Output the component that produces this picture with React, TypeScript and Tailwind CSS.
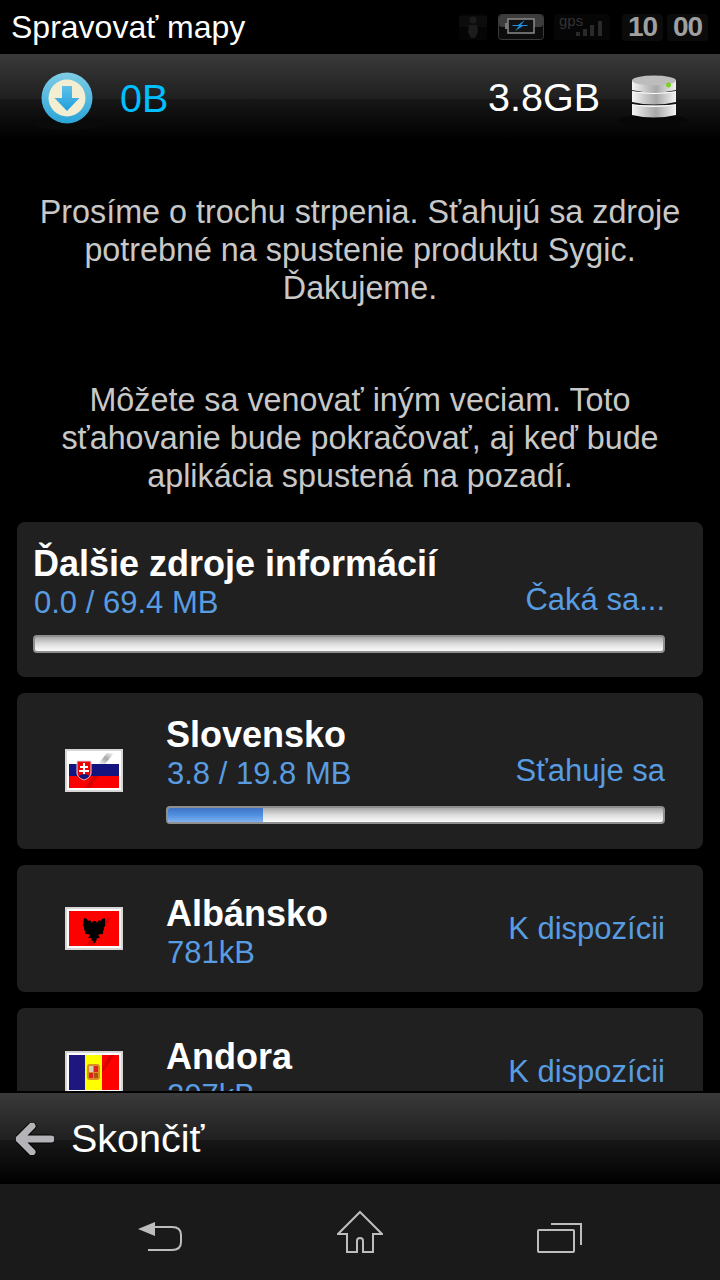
import React from "react";

const font = { fontFamily: '"Liberation Sans", Arial, sans-serif' };

function DownloadIcon() {
  return (
    <svg width="70" height="60" viewBox="0 0 70 60" className="shrink-0">
      <defs>
        <linearGradient id="dl" x1="0" y1="0" x2="0" y2="1">
          <stop offset="0" stopColor="#7fcde6" />
          <stop offset="1" stopColor="#2aa5d8" />
        </linearGradient>
        <linearGradient id="dla" x1="0" y1="0" x2="0" y2="1">
          <stop offset="0" stopColor="#5fc0ea" />
          <stop offset="1" stopColor="#1e9fdc" />
        </linearGradient>
      </defs>
      <ellipse cx="35" cy="51" rx="35" ry="7" fill="#0a0a0a" />
      <circle cx="35" cy="26" r="25.5" fill="url(#dl)" />
      <circle cx="35" cy="26" r="18.5" fill="#f3edd2" />
      <path d="M30 14h10v12h7.5L35 39 22.500 26H30z" fill="url(#dla)" />
    </svg>
  );
}

function DbIcon() {
  const slab = (y: number, h: number) => `M14 ${y}h44v${h - 3}q-22 5 -44 0z`;
  return (
    <svg width="70" height="54" viewBox="0 0 70 54" className="shrink-0">
      <defs>
        <linearGradient id="db" x1="0" y1="0" x2="1" y2="0">
          <stop offset="0" stopColor="#f6f6f6" />
          <stop offset="0.3" stopColor="#c8c8c8" />
          <stop offset="0.55" stopColor="#a8a8a8" />
          <stop offset="1" stopColor="#f4f4f4" />
        </linearGradient>
      </defs>
      <ellipse cx="35" cy="46" rx="35" ry="5" fill="#070707" />
      <path d={slab(31, 13)} fill="url(#db)" />
      <path d="M14 31q22 4 44 0v-1q-22 4-44 0z" fill="#fff" />
      <path d={slab(18, 13)} fill="url(#db)" />
      <path d="M14 18q22 4 44 0v-1q-22 4-44 0z" fill="#fff" />
      <path d={slab(6, 13)} fill="url(#db)" />
      <ellipse cx="36" cy="6.500" rx="22" ry="5" fill="#bdbdbd" />
      <circle cx="50.500" cy="11" r="2.500" fill="#79d321" />
    </svg>
  );
}

function Slovakia() {
  return (
    <svg width="58" height="43" viewBox="0 0 58 43">
      <defs>
        <linearGradient id="sk" x1="0" y1="1" x2="1" y2="0">
          <stop offset="0" stopColor="#777" stopOpacity="0" />
          <stop offset="0.5" stopColor="#777" stopOpacity="0.65" />
          <stop offset="1" stopColor="#777" stopOpacity="0" />
        </linearGradient>
      </defs>
      <rect width="58" height="43" fill="#d6d6d6" />
      <rect x="2" y="2" width="54" height="39" fill="#fff" />
      <rect x="4" y="15" width="50" height="12" fill="#14147e" />
      <rect x="4" y="27" width="50" height="12" fill="#fb0000" />
      <path d="M33 15l9-11h7l-9 11z" fill="url(#sk)" />
      <path d="M20 39l8-12h5l-8 12z" fill="#900" opacity="0.35" />
      <path d="M12 12h14v12q0 4-7 7q-7-3-7-7z" fill="#f00000" stroke="#d8d8f0" strokeWidth="1" />
      <path d="M18 14h2v3h3v2h-3v2h4v2h-4v4h-2v-4h-4v-2h4v-2h-3v-2h3z" fill="#fff" />
      <path d="M13.500 27q5.500-4 11 0q-2 2.500-5.500 3.500q-3.500-1-5.500-3.500z" fill="#14147e" />
    </svg>
  );
}

function Albania() {
  return (
    <svg width="58" height="43" viewBox="0 0 58 43">
      <rect width="58" height="43" fill="#d6d6d6" />
      <rect x="2" y="2" width="54" height="39" fill="#fff" />
      <rect x="4" y="4" width="50" height="35" fill="#fd0000" />
      <path d="M21 38l20-26 5-2-17 28z" fill="#b80000" opacity="0.5" />
      <path d="M19 11l3 1 1 2 2-1 2 3 1-2h3l1 2 2-3 2 1 1-2 3-1v8l-1 1v3l-1 1v3l-3 0-2 1 2 3-3 0-1 3-1 2-1 0-2-3-1-2h-3l2-3-2-1h-3v-3l-1-1v-3l-1-1z" fill="#000" />
    </svg>
  );
}

function Andorra() {
  return (
    <svg width="58" height="43" viewBox="0 0 58 43">
      <rect width="58" height="43" fill="#d6d6d6" />
      <rect x="2" y="2" width="54" height="41" fill="#fff" />
      <rect x="4" y="4" width="16" height="35" fill="#1f1780" />
      <rect x="20" y="4" width="17" height="35" fill="#ffff00" />
      <rect x="37" y="4" width="17" height="35" fill="#fd0000" />
      <path d="M37 18l8-14h4l-12 18z" fill="#b80000" opacity="0.6" />
      <rect x="22" y="13" width="13" height="16" rx="3" fill="#d99020" />
      <rect x="24" y="15" width="4" height="6" fill="#d8d0b0" />
      <rect x="29" y="15" width="4" height="6" fill="#d22" />
      <rect x="24" y="22" width="4" height="5" fill="#d22" />
      <rect x="29" y="22" width="4" height="5" fill="#b05010" />
    </svg>
  );
}

function Bar({ pct }: { pct?: number }) {
  return (
    <div className="relative h-[18px] rounded-[4px] border-2 border-[#8f8f8f] bg-gradient-to-b from-[#a9a9a9] via-[#dcdcdc] to-[#fbfbfb] overflow-hidden">
      {pct ? (
        <div
          className="h-full bg-gradient-to-b from-[#3f73c4] via-[#4f8fe0] to-[#7fb2ee]"
          style={{ width: `${pct}%` }}
        />
      ) : null}
    </div>
  );
}

function Card({
  flag,
  title,
  size,
  status,
  pct,
  bar,
  h,
}: {
  flag?: React.ReactNode;
  title: string;
  size: string;
  status: string;
  pct?: number;
  bar?: boolean;
  h: string;
}) {
  return (
    <div className={`${h} shrink-0 flex rounded-[8px] bg-[#202020] pr-[38px] ${flag ? "" : "pl-[16px]"}`}>
      {flag ? <div className="w-[149px] shrink-0 flex items-start justify-center pl-[6px] pr-[2px]">{flag}</div> : null}
      <div className="flex-1 min-w-0">
        <div className="flex items-end justify-between">
          <div>
            <div className={`text-[36px] font-bold leading-[38px] text-white whitespace-nowrap ${bar ? "mt-[23px]" : "mt-[30px]"}`}>{title}</div>
            <div className="text-[31px] leading-[38px] text-[#589ce2] whitespace-nowrap mt-[1px] ml-[1px]">{size}</div>
          </div>
          <div className={`text-[31px] leading-[34px] text-[#589ce2] whitespace-nowrap ${bar ? "mb-[5px]" : "mb-[26px]"}`}>{status}</div>
        </div>
        {bar ? (
          <div className="mt-[13px]">
            <Bar pct={pct} />
          </div>
        ) : null}
      </div>
    </div>
  );
}

export default function App() {
  const barBg =
    "bg-[linear-gradient(to_bottom,#3a3a3a_0%,#1f1f1f_52%,#171717_52%,#000000_100%)]";
  return (
    <div style={font} className="w-[720px] h-[1280px] bg-black flex flex-col overflow-hidden text-white">
      <div className="h-[54px] shrink-0 flex items-center justify-between pl-[11px] pr-[12px]">
        <div className="text-[32px] leading-none whitespace-nowrap">Spravovať mapy</div>
        <div className="flex items-center">
          <svg width="28" height="26" viewBox="0 0 28 26" className="mr-[11px]">
            <rect width="28" height="26" rx="3" fill="#050505" />
            <rect y="2" width="28" height="11" fill="#0c0c0c" />
            <circle cx="14" cy="6" r="3.500" fill="#1c1c1c" />
            <path d="M10 11h8l1 7-3 6h-4l-3-6z" fill="#1c1c1c" />
          </svg>
          <svg width="46" height="26" viewBox="0 0 46 26" className="mr-[10px]">
            <rect x="0.500" y="0.500" width="45" height="25" rx="3" fill="#0c0c0c" stroke="#3a3a3a" />
            <rect x="1" y="1" width="44" height="12" rx="3" fill="#3d3d3d" />
            <rect x="10" y="5" width="26" height="14" fill="#111" stroke="#8a8a8a" strokeWidth="1.500" />
            <rect x="7" y="9" width="3" height="6" fill="#777" />
            <path d="M27 6l-7 5h-5l-1 1h7l-4 5 8-5h4l1-1h-7z" fill="#1e8fe0" />
          </svg>
          <div className="w-[56px] h-[26px] mr-[12px] bg-[#060606] rounded-[3px] relative">
            <span className="absolute left-[5px] top-[-2px] text-[15px] leading-[18px] text-[#333333]">gps</span>
            <svg width="34" height="18" viewBox="0 0 34 18" className="absolute left-[20px] top-[4px]">
              <rect x="2" y="14" width="4" height="4" fill="#2a2a2a" />
              <rect x="9" y="11" width="4" height="7" fill="#2a2a2a" />
              <rect x="16" y="7" width="4" height="11" fill="#2a2a2a" />
              <rect x="24" y="3" width="4" height="15" fill="#2a2a2a" />
            </svg>
          </div>
          <div className="flex gap-[4px] text-[#a0a0a0] font-bold text-[28px] tracking-[-1px] leading-none">
            <div className="w-[41px] h-[27px] bg-[#0b0b0b] rounded-[4px] flex items-center justify-center">10</div>
            <div className="w-[41px] h-[27px] bg-[#0b0b0b] rounded-[4px] flex items-center justify-center">00</div>
          </div>
        </div>
      </div>

      <div className={`h-[86px] shrink-0 relative ${barBg} flex items-start justify-between pt-[18px] pl-[32px] pr-[32px]`}>
        <div className="flex items-start">
          <DownloadIcon />
          <div className="text-[39.500px] leading-[52px] text-[#00bfff] ml-[18px]">0B</div>
        </div>
        <div className="flex items-start">
          <div className="text-[39.500px] leading-[50px] text-white mr-[18px]">3.8GB</div>
          <div className="mt-[2px]"><DbIcon /></div>
        </div>
      </div>

      <div className="flex-1 min-h-0 overflow-hidden flex flex-col">
        <div className="text-center text-[#c8c8c8] text-[32.300px] leading-[38px] pt-[53px] shrink-0 whitespace-nowrap">
          <p>Prosíme o trochu strpenia. Sťahujú sa zdroje<br />potrebné na spustenie produktu Sygic.<br />Ďakujeme.</p>
          <p className="mt-[74px]">Môžete sa venovať iným veciam. Toto<br />sťahovanie bude pokračovať, aj keď bude<br />aplikácia spustená na pozadí.</p>
        </div>
        <div className="mt-[27px] mx-[17px] flex flex-col gap-[16px] shrink-0">
          <Card title="Ďalšie zdroje informácií" size="0.0 / 69.4 MB" status="Čaká sa..." bar h="h-[155px]" />
          <Card flag={<div className="mt-[56px]"><Slovakia /></div>} title="Slovensko" size="3.8 / 19.8 MB" status="Sťahuje sa" pct={19.2} bar h="h-[156px]" />
          <Card flag={<div className="mt-[42px]"><Albania /></div>} title="Albánsko" size="781kB" status="K dispozícii" h="h-[127px]" />
          <Card flag={<div className="mt-[43px]"><Andorra /></div>} title="Andora" size="207kB" status="K dispozícii" h="h-[127px]" />
        </div>
      </div>

      <div className={`h-[93px] shrink-0 flex items-center pl-[16px] ${barBg} border-t-2 border-black`}>
        <svg width="38" height="32" viewBox="0 0 38 32">
          <path d="M16 3L3 16l13 13M4 16h31" fill="none" stroke="#000" strokeWidth="9" strokeLinecap="round" strokeLinejoin="round" />
          <path d="M16 3L3 16l13 13M4 16h31" fill="none" stroke="#b4b4b8" strokeWidth="7" strokeLinecap="round" strokeLinejoin="round" />
        </svg>
        <div className="text-[39.500px] leading-none text-white ml-[17px]">Skončiť</div>
      </div>

      <div className="h-[96px] shrink-0 bg-[#1a1a1a] flex items-start justify-center relative">
        <div className="w-[720px] flex justify-between pt-[26px] pl-[137px] pr-[137px]">
          <svg width="46" height="36" viewBox="0 0 46 36" className="mt-[10px]">
            <path d="M1 9L18 2v14z" fill="#bdbdbd" />
            <path d="M16 7h19q9 0 9 8v7q0 8-9 8H11" fill="none" stroke="#bdbdbd" strokeWidth="2" />
          </svg>
          <svg width="46" height="44" viewBox="0 0 46 44">
            <path d="M23 2L45 24H36V42H26V31Q26 28 23 28Q20 28 20 31V42H10V24H1Z" fill="none" stroke="#bdbdbd" strokeWidth="2" />
          </svg>
          <svg width="46" height="32" viewBox="0 0 46 32" className="mt-[12px]">
            <rect x="1" y="8" width="36" height="22" rx="1" fill="none" stroke="#bdbdbd" strokeWidth="2" />
            <path d="M14 2h30v21" fill="none" stroke="#bdbdbd" strokeWidth="2" />
          </svg>
        </div>
      </div>
    </div>
  );
}
